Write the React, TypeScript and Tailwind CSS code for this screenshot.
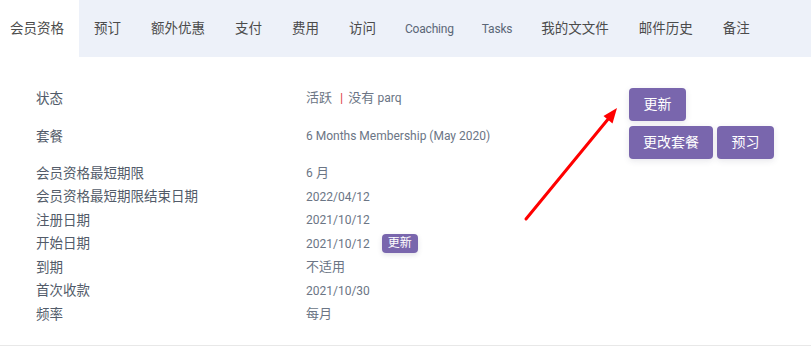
import React from 'react';

const FONT = { fontFamily: 'Roboto, "Noto Sans CJK SC", sans-serif' };

const tabs = [
  { label: '会员资格', active: true },
  { label: '预订' },
  { label: '额外优惠' },
  { label: '支付' },
  { label: '费用' },
  { label: '访问' },
  { label: 'Coaching', latin: true },
  { label: 'Tasks', latin: true },
  { label: '我的文文件' },
  { label: '邮件历史' },
  { label: '备注' },
];

const Num = ({ children }: { children: React.ReactNode }) => <span className="text-[12px]">{children}</span>;

const rows: { label: string; value: React.ReactNode; badge?: boolean }[] = [
  { label: '会员资格最短期限', value: <><Num>6</Num> 月</> },
  { label: '会员资格最短期限结束日期', value: <Num>2022/04/12</Num> },
  { label: '注册日期', value: <Num>2021/10/12</Num> },
  { label: '开始日期', value: <Num>2021/10/12</Num>, badge: true },
  { label: '到期', value: '不适用' },
  { label: '首次收款', value: <Num>2021/10/30</Num> },
  { label: '频率', value: '每月' },
];

function Btn({ children, w }: { children: React.ReactNode; w: string }) {
  return (
    <button
      className={`${w} h-[33px] rounded-[4px] bg-[#7966ad] text-[14px] text-white shadow-[0_2px_6px_rgba(60,60,90,0.12)]`}
    >
      {children}
    </button>
  );
}

export default function App() {
  return (
    <div className="relative w-[811px] h-[354px] bg-white overflow-hidden" style={FONT}>
      {/* tab bar */}
      <div className="flex h-[57px] bg-[#edf1f9]">
        <div className="flex -ml-[5px]">
          {tabs.map((t) => (
            <div
              key={t.label}
              className={`flex items-center ${t.active ? 'bg-white' : ''} ${
                t.latin
                  ? 'px-[14px] text-[12px] tracking-[-0.2px] text-[#5b6777]'
                  : 'px-[15px] text-[13.5px] text-[#4b4b4b]'
              }`}
            >
              {t.label}
            </div>
          ))}
        </div>
      </div>

      {/* details */}
      <div className="flex border-b border-[#e8e8e8] pt-[31px] pb-[19px]">
        <div className="w-[593px] pl-[36px] text-[13.5px] text-[#525b69]">
          <div className="flex h-[38px] leading-[20px]">
            <div className="w-[270px]">状态</div>
            <div className="text-[13px] text-[#6b7585]">
              活跃<span className="ml-[8px] mr-[5px] text-[#e0454a]">|</span>没有 <Num>parq</Num>
            </div>
          </div>
          <div className="flex h-[35px] leading-[20px]">
            <div className="w-[270px]">套餐</div>
            <div className="text-[12px] text-[#6b7585]">6 Months Membership (May 2020)</div>
          </div>
          {rows.map((r) => (
            <div key={r.label} className="flex h-[23.5px] items-center">
              <div className="w-[270px]">{r.label}</div>
              <div className="flex items-center text-[13px] text-[#6b7585]">
                <span>{r.value}</span>
                {r.badge && (
                  <span className="ml-[12px] flex h-[19px] w-[36px] items-center justify-center rounded-[4px] bg-[#7966ad] text-[12px] text-white shadow-[0_2px_5px_rgba(60,60,90,0.15)]">
                    更新
                  </span>
                )}
              </div>
            </div>
          ))}
        </div>
        <div className="ml-[36px] flex flex-col gap-[5px]">
          <Btn w="w-[57px]">更新</Btn>
          <div className="flex gap-[4px]">
            <Btn w="w-[84px]">更改套餐</Btn>
            <Btn w="w-[57px]">预习</Btn>
          </div>
        </div>
      </div>

      {/* annotation arrow */}
      <svg className="absolute left-0 top-0 pointer-events-none" width="811" height="354">
        <line x1="526" y1="219" x2="609" y2="118" stroke="#ff0000" strokeWidth="3" strokeLinecap="round" />
        <polygon points="617,108 612.5,123.5 603.5,116" fill="#ff0000" />
      </svg>
    </div>
  );
}
